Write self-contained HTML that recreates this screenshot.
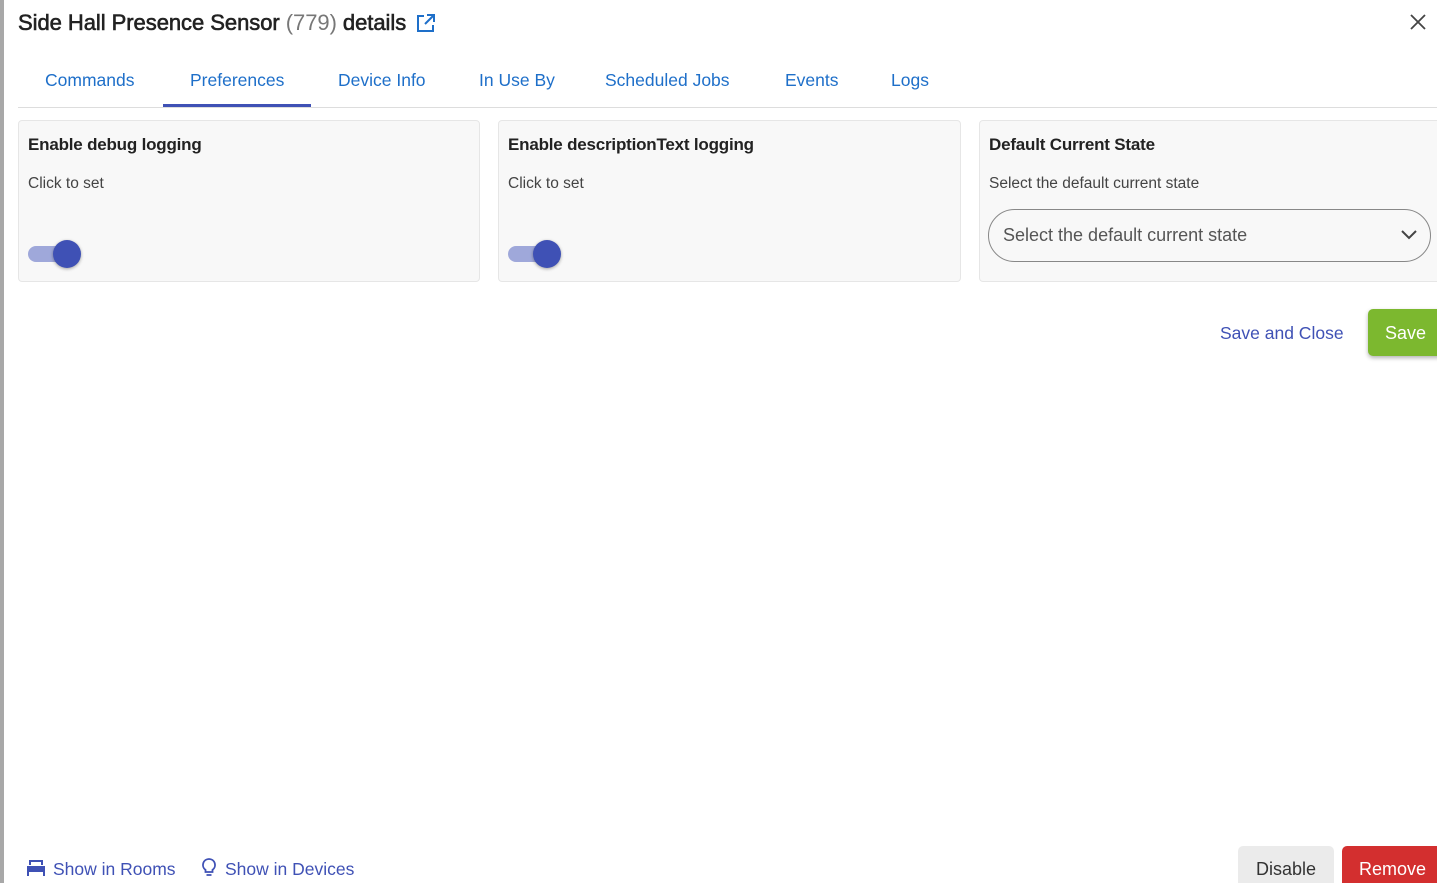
<!DOCTYPE html>
<html><head><meta charset="utf-8"><style>
*{box-sizing:border-box;margin:0;padding:0}
html,body{width:1437px;height:883px;overflow:hidden}
body{background:#fff;font-family:"Liberation Sans",sans-serif;position:relative}
.abs{position:absolute;white-space:nowrap}
.strip{left:0;top:0;width:4px;height:883px;background:#a8a8a8}
.title{left:18px;top:10px;font-size:22px;color:#222;letter-spacing:-0.05px}
.title span{color:#777}
.tab{top:70px;font-size:17.5px;color:#1e6fc9}
.tabline{left:18px;top:107px;width:1419px;height:1px;background:#ddd}
.active{left:163px;top:104px;width:148px;height:3px;background:#3f51b5}
.card{top:120px;height:162px;background:#f8f8f8;border:1px solid #e6e6e6;border-radius:4px}
.ch{font-size:17px;color:#222;font-weight:bold;letter-spacing:-0.2px}
.cs{font-size:15.5px;color:#444}
.track{width:50px;height:16px;border-radius:8px;background:#9fa8da}
.knob{width:28px;height:28px;border-radius:50%;background:#3f51b5;box-shadow:0 1px 3px rgba(0,0,0,.35)}
.sel{left:988px;top:209px;width:443px;height:53px;border:1px solid #888;border-radius:27px;font-size:18px;color:#555;padding:15px 0 0 14px}
.link{font-size:17.5px;color:#3f51b5}
</style></head><body>
<div class="abs strip"></div>
<div class="abs title"><b style="font-weight:normal;-webkit-text-stroke:0.6px #222">Side Hall Presence Sensor</b> <span>(779)</span> <b style="font-weight:normal;-webkit-text-stroke:0.6px #222">details</b></div>
<svg class="abs" style="left:416px;top:13px" width="20" height="20" viewBox="0 0 20 20" fill="none" stroke="#1e6fc9" stroke-width="2"><path d="M8 3H2v15h15v-6M11 2h7v7M18 2l-9 9"/></svg>
<svg class="abs" style="left:1410px;top:14px" width="16" height="16" viewBox="0 0 16 16" stroke="#444" stroke-width="1.8"><path d="M1 1l14 14M15 1L1 15"/></svg>
<div class="abs tab" style="left:45px">Commands</div>
<div class="abs tab" style="left:190px">Preferences</div>
<div class="abs tab" style="left:338px">Device Info</div>
<div class="abs tab" style="left:479px">In Use By</div>
<div class="abs tab" style="left:605px">Scheduled Jobs</div>
<div class="abs tab" style="left:785px">Events</div>
<div class="abs tab" style="left:891px">Logs</div>
<div class="abs tabline"></div><div class="abs active"></div>

<div class="abs card" style="left:18px;width:462px"></div>
<div class="abs ch" style="left:28px;top:135px">Enable debug logging</div>
<div class="abs cs" style="left:28px;top:175px">Click to set</div>
<div class="abs track" style="left:28px;top:246px"></div><div class="abs knob" style="left:53px;top:240px"></div>

<div class="abs card" style="left:498px;width:463px"></div>
<div class="abs ch" style="left:508px;top:135px">Enable descriptionText logging</div>
<div class="abs cs" style="left:508px;top:175px">Click to set</div>
<div class="abs track" style="left:508px;top:246px"></div><div class="abs knob" style="left:533px;top:240px"></div>

<div class="abs card" style="left:979px;width:470px"></div>
<div class="abs ch" style="left:989px;top:135px">Default Current State</div>
<div class="abs cs" style="left:989px;top:175px">Select the default current state</div>
<div class="abs sel">Select the default current state</div>
<svg class="abs" style="left:1401px;top:230px" width="16" height="10" viewBox="0 0 16 10" fill="none" stroke="#444" stroke-width="2"><path d="M1 1l7 7 7-7"/></svg>

<div class="abs link" style="left:1220px;top:323px">Save and Close</div>
<div class="abs" style="left:1368px;top:309px;width:80px;height:47px;background:#7cb82f;border-radius:5px;box-shadow:0 2px 4px rgba(0,0,0,.3);color:#fff;font-size:18px;padding:14px 0 0 17px">Save</div>

<svg class="abs" style="left:26px;top:859px" width="20" height="18" viewBox="0 0 20 18" fill="#3f51b5"><path d="M3 1h14v5H3z M1 7h18v6H1z M1 13h2v4H1z M17 13h2v4h-2z"/><path d="M5 3h10v3H5z" fill="#fff"/></svg>
<div class="abs link" style="left:53px;top:859px">Show in Rooms</div>
<svg class="abs" style="left:201px;top:858px" width="16" height="20" viewBox="0 0 16 20" fill="none" stroke="#3f51b5" stroke-width="1.8"><path d="M8 1a6 6 0 0 0-3.5 10.9V14h7v-2.1A6 6 0 0 0 8 1zM5.5 17h5"/></svg>
<div class="abs link" style="left:225px;top:859px">Show in Devices</div>

<div class="abs" style="left:1238px;top:846px;width:96px;height:50px;background:#ebebeb;border-radius:5px;font-size:18px;color:#333;padding:13px 0 0 18px">Disable</div>
<div class="abs" style="left:1342px;top:846px;width:100px;height:50px;background:#d32f2f;border-radius:5px;font-size:18px;color:#fff;padding:13px 0 0 17px">Remove</div>
</body></html>
